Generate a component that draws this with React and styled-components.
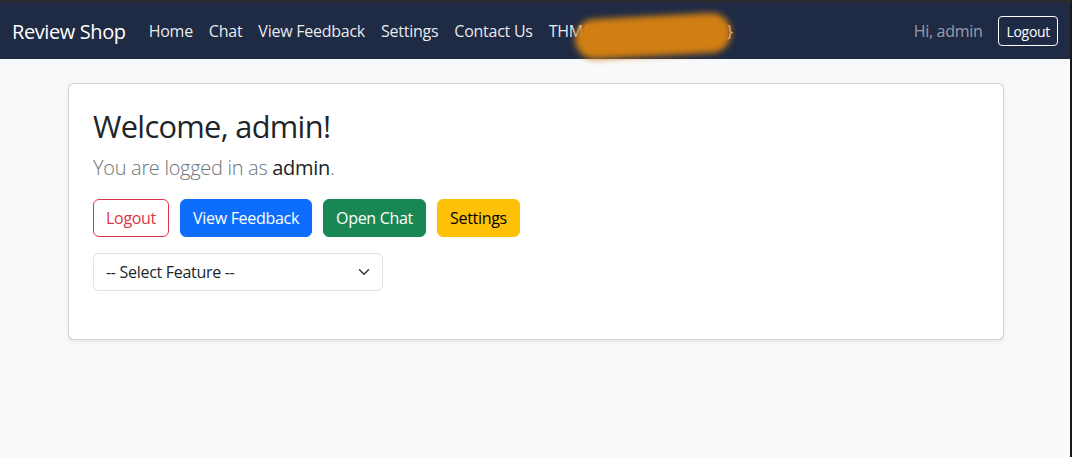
import React from "react";
import styled, { createGlobalStyle } from "styled-components";

const GlobalStyle = createGlobalStyle`
  html, body {
    margin: 0;
    padding: 0;
    background: #f8f9fa;
  }
  body {
    font-family: "Open Sans", "Noto Sans", sans-serif;
    color: #212529;
  }
  * { box-sizing: border-box; }
`;

const Page = styled.div`
  min-height: 457px;
  background: #f8f9fa;
  border-top: 3px solid #2a2b30;
  border-right: 2px solid #19191b;
`;

const NavBar = styled.nav`
  height: 56px;
  background: #1f2a44;
  display: flex;
  align-items: center;
  padding: 0 12px;
`;

const Brand = styled.a`
  font-size: 20px;
  color: #fff;
  margin-right: 15px;
  letter-spacing: -0.4px;
`;

const NavList = styled.div`
  display: flex;
  align-items: center;
  flex: 1;
`;

const NavLink = styled.a`
  position: relative;
  font-size: 16px;
  color: rgba(255, 255, 255, 0.92);
  padding: 8px;
  letter-spacing: -0.25px;
`;

const Hidden = styled.span`
  display: inline-block;
  width: 138px;
`;

const Blob = styled.span`
  position: absolute;
  left: 34px;
  top: 4px;
  width: 156px;
  height: 40px;
  border-radius: 21px;
  background: #d17f12;
  filter: blur(3px);
  transform: rotate(-3deg);
`;

const Greeting = styled.span`
  font-size: 16px;
  color: rgba(255, 255, 255, 0.55);
  margin-right: 16px;
  letter-spacing: -0.3px;
`;

const SmallButton = styled.button`
  font-family: inherit;
  font-size: 14px;
  color: #fff;
  background: transparent;
  border: 1px solid #fff;
  border-radius: 4px;
  padding: 4px 7px;
  height: 30px;
  letter-spacing: -0.3px;
`;

const Container = styled.div`
  width: 960px;
  margin: 0 auto;
  padding: 24px 11px 0 13px;
`;

const Card = styled.div`
  background: #fff;
  border: 1px solid rgba(0, 0, 0, 0.175);
  border-radius: 6px;
  box-shadow: 0 0.125rem 0.25rem rgba(0, 0, 0, 0.075);
  padding: 24px;
`;

const Title = styled.h2`
  margin: 0 0 8px;
  font-size: 30.8px;
  font-weight: 400;
  line-height: 1.2;
  letter-spacing: -0.7px;
`;

const Lead = styled.p`
  margin: 0 0 16px;
  font-size: 20px;
  font-weight: 300;
  line-height: 1.5;
  color: #6c757d;
  letter-spacing: -0.3px;

  strong {
    font-weight: 500;
    color: #212529;
  }
`;

const ButtonRow = styled.div`
  display: flex;
  gap: 11px;
`;

const variants = {
  danger: { bg: "#fff", fg: "#dc3545", border: "#dc3545" },
  primary: { bg: "#0d6efd", fg: "#fff", border: "#0d6efd" },
  success: { bg: "#198754", fg: "#fff", border: "#198754" },
  warning: { bg: "#ffc107", fg: "#000", border: "#ffc107" },
};

const Button = styled.button`
  font-family: inherit;
  font-size: 16px;
  height: 38px;
  padding: 0 12px;
  border-radius: 6px;
  letter-spacing: -0.3px;
  background: ${(p) => variants[p.$variant].bg};
  color: ${(p) => variants[p.$variant].fg};
  border: 1px solid ${(p) => variants[p.$variant].border};
`;

const SelectBox = styled.div`
  margin-top: 16px;
  margin-bottom: 24px;
  width: 290px;
  height: 38px;
  border: 1px solid #dee2e6;
  border-radius: 6px;
  display: flex;
  align-items: center;
  justify-content: space-between;
  padding: 0 10px 0 12px;
  font-size: 16px;
  color: #212529;
  letter-spacing: -0.3px;
`;

const Chevron = () => (
  <svg width="16" height="12" viewBox="0 0 16 16">
    <path d="m2 5 6 6 6-6" fill="none" stroke="#343a40" strokeWidth="2" strokeLinecap="round" strokeLinejoin="round" />
  </svg>
);

export default function App() {
  return (
    <Page>
      <GlobalStyle />
      <NavBar>
        <Brand>Review Shop</Brand>
        <NavList>
          <NavLink>Home</NavLink>
          <NavLink>Chat</NavLink>
          <NavLink>View Feedback</NavLink>
          <NavLink>Settings</NavLink>
          <NavLink>Contact Us</NavLink>
          <NavLink>
            THM{"{"}<Hidden />{"}"}
            <Blob />
          </NavLink>
        </NavList>
        <Greeting>Hi, admin</Greeting>
        <SmallButton>Logout</SmallButton>
      </NavBar>
      <Container>
        <Card>
          <Title>Welcome, admin!</Title>
          <Lead>You are logged in as <strong>admin</strong>.</Lead>
          <ButtonRow>
            <Button $variant="danger">Logout</Button>
            <Button $variant="primary">View Feedback</Button>
            <Button $variant="success">Open Chat</Button>
            <Button $variant="warning">Settings</Button>
          </ButtonRow>
          <SelectBox>
            <span>-- Select Feature --</span>
            <Chevron />
          </SelectBox>
        </Card>
      </Container>
    </Page>
  );
}
